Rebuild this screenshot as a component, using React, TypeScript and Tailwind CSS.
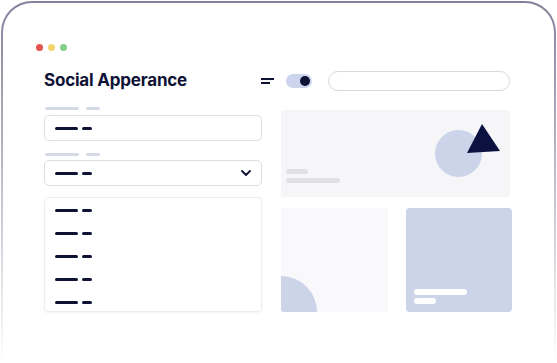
import React from "react";

const font = { fontFamily: "Inter, 'Noto Sans', sans-serif" };

function DarkBars() {
  return (
    <div className="flex items-center gap-[4px]">
      <div className="w-[23px] h-[3px] rounded-full bg-[#0e1235]" />
      <div className="w-[10px] h-[3px] rounded-full bg-[#0e1235]" />
    </div>
  );
}

function FieldLabel() {
  return (
    <div className="flex items-center gap-[7px] pl-[1px]">
      <div className="w-[34px] h-[3px] rounded-full bg-[#d6dae7]" />
      <div className="w-[14px] h-[3px] rounded-full bg-[#d6dae7]" />
    </div>
  );
}

export default function App() {
  return (
    <div className="w-[557px] h-[363px] bg-white p-[1px] pb-0 overflow-hidden" style={font}>
      <div className="h-full rounded-t-[31px] bg-gradient-to-b from-[#84829a] to-white pt-[2px] px-[2px]">
        <div className="h-full rounded-t-[29px] bg-white pt-[41px]">
          {/* window dots */}
          <div className="flex items-center gap-[5px] pl-[33px] h-[7px]">
            <div className="w-[7px] h-[7px] rounded-full bg-[#e6534c]" />
            <div className="w-[7px] h-[7px] rounded-full bg-[#f3d46c]" />
            <div className="w-[7px] h-[7px] rounded-full bg-[#80d08b]" />
          </div>

          <div className="pl-[41px] pr-[44px]">
            {/* header */}
            <div className="mt-[19px] h-[21px] flex items-center">
              <h1 className="text-[17px] leading-none font-bold text-[#0e1235] tracking-[-0.2px]">
                Social Apperance
              </h1>
              <div className="ml-auto flex items-center">
                <div className="flex flex-col gap-[2px]">
                  <div className="w-[13px] h-[2px] bg-[#0e1235]" />
                  <div className="w-[9px] h-[2px] bg-[#0e1235]" />
                </div>
                <div className="ml-[12px] w-[26px] h-[14px] rounded-full bg-[#cdd5ec] flex items-center justify-end pr-[2px]">
                  <div className="w-[10px] h-[10px] rounded-full bg-[#0e1235]" />
                </div>
                <div className="ml-[16px] w-[182px] h-[20px] rounded-full border border-[#d9d9df] bg-white" />
              </div>
            </div>

            {/* body */}
            <div className="mt-[16px] flex gap-[19px]">
              <div className="w-[218px] flex flex-col">
                <FieldLabel />
                <div className="mt-[5px] h-[26px] rounded-[5px] border border-[#dcdde3] flex items-center pl-[10px]">
                  <DarkBars />
                </div>
                <div className="mt-[12px]">
                  <FieldLabel />
                </div>
                <div className="mt-[4px] h-[26px] rounded-[5px] border border-[#dcdde3] flex items-center pl-[10px] pr-[10px]">
                  <DarkBars />
                  <svg className="ml-auto" width="10" height="6" viewBox="0 0 10 6">
                    <polyline points="1,1 5,5 9,1" fill="none" stroke="#0e1235" strokeWidth="1.8" strokeLinecap="round" strokeLinejoin="round" />
                  </svg>
                </div>
                <div className="mt-[11px] rounded-[4px] border border-[#eceef3] shadow-[0_1px_3px_rgba(20,30,80,0.05)] flex flex-col gap-[20px] pl-[10px] pt-[11px] pb-[7px]">
                  <DarkBars />
                  <DarkBars />
                  <DarkBars />
                  <DarkBars />
                  <DarkBars />
                </div>
              </div>

              <div className="flex-1 mt-[3px] flex flex-col">
                <div className="relative h-[87px] rounded-[3px] bg-[#f6f6f8] overflow-hidden">
                  <svg className="absolute left-0 top-0" width="229" height="87" viewBox="0 0 229 87">
                    <circle cx="177.5" cy="43.5" r="23.5" fill="#ccd4ea" />
                    <polygon points="201,14 219,41 186,43" fill="#0c1240" />
                  </svg>
                  <div className="absolute left-[5px] top-[59px] w-[22px] h-[5px] rounded-full bg-[#e0e0e5]" />
                  <div className="absolute left-[5px] top-[68px] w-[54px] h-[5px] rounded-full bg-[#e0e0e5]" />
                </div>
                <div className="mt-[11px] -mr-[2px] grid grid-cols-2 gap-[18px]">
                  <div className="relative h-[104px] rounded-[3px] bg-[#f9f9fb] overflow-hidden">
                    <div className="absolute -left-[36px] -bottom-[36px] w-[72px] h-[72px] rounded-full bg-[#ccd4ea]" />
                  </div>
                  <div className="h-[104px] rounded-[4px] bg-[#ccd4ea] flex flex-col justify-end gap-[3px] p-[8px]">
                    <div className="w-[53px] h-[6px] rounded-full bg-white" />
                    <div className="w-[22px] h-[6px] rounded-full bg-white" />
                  </div>
                </div>
              </div>
            </div>
          </div>
        </div>
      </div>
    </div>
  );
}
